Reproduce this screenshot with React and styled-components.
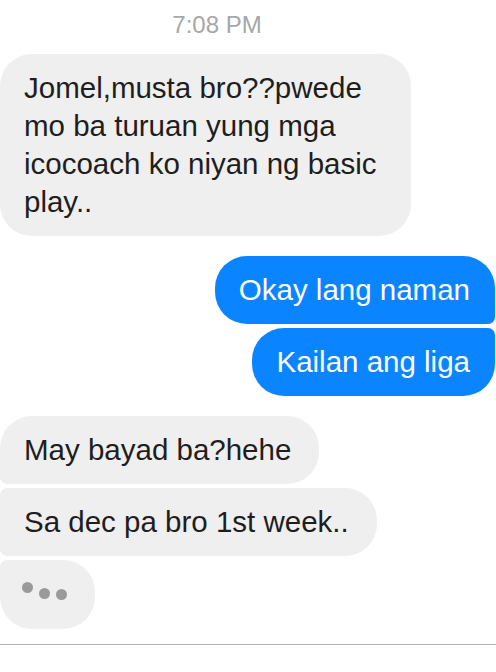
import React from 'react';
import styled, { createGlobalStyle } from 'styled-components';

const GlobalStyle = createGlobalStyle`
  html, body {
    margin: 0;
    padding: 0;
    background: #ffffff;
  }
  body {
    font-family: "Liberation Sans", Arial, Helvetica, sans-serif;
  }
`

const Screen = styled.div`
  width: 496px;
  height: 672px;
  overflow: hidden;
  background: #ffffff;
  display: flex;
  flex-direction: column;
`

const Thread = styled.div`
  display: flex;
  flex-direction: column;
  gap: 20px;
  padding-top: 11px;
`

const Timestamp = styled.div`
  text-align: center;
  font-size: 24px;
  line-height: 28px;
  color: #a7a7a7;
  margin-right: 62px;
  margin-bottom: -5px;
`

const Group = styled.div`
  display: flex;
  flex-direction: column;
  align-items: ${(p) => (p.$mine ? 'flex-end' : 'flex-start')};
  gap: 4px;
`

const BIG = 32;
const SMALL = 7;

const cornerRadius = (mine, pos) => {
  const top = pos === 'middle' || pos === 'last' ? SMALL : BIG;
  const bottom = pos === 'middle' || pos === 'first' ? SMALL : BIG;
  // grouped side gets the small corners
  return mine
    ? `${BIG}px ${top}px ${bottom}px ${BIG}px`
    : `${top}px ${BIG}px ${BIG}px ${bottom}px`;
};

const Bubble = styled.div`
  box-sizing: border-box;
  max-width: ${(p) => (p.$wide ? '411px' : '420px')};
  width: ${(p) => (p.$wide ? '411px' : 'auto')};
  padding: 15px ${(p) => (p.$mine ? '25px' : '28px')} 15px 24px;
  margin-right: ${(p) => (p.$mine ? '1px' : '0')};
  font-size: 29.5px;
  line-height: 38px;
  color: ${(p) => (p.$mine ? '#ffffff' : '#1e1e1e')};
  background: ${(p) => (p.$mine ? '#0a84ff' : '#efefef')};
  border-radius: ${(p) => cornerRadius(p.$mine, p.$pos)};
  white-space: ${(p) => (p.$wide ? 'normal' : 'nowrap')};
`

const TypingBubble = styled.div`
  box-sizing: border-box;
  width: 95px;
  height: 69px;
  padding-left: 22px;
  padding-top: 22px;
  display: flex;
  align-items: flex-start;
  gap: 6px;
  background: #efefef;
  border-radius: ${SMALL}px ${BIG}px ${BIG}px ${BIG}px;
`

const Dot = styled.span`
  width: 11px;
  height: 11px;
  border-radius: 50%;
  background: #9a9a9a;
  margin-top: ${(p) => p.$drop}px;
`

const Divider = styled.div`
  margin-top: 15px;
  border-top: 1.5px solid #b2b2b2;
`

const App = () => {
  return (
    <Screen>
      <GlobalStyle />
      <Thread>
        <Timestamp>7:08 PM</Timestamp>
        <Group>
          <Bubble $wide $pos="single">
            Jomel,musta bro??pwede mo ba turuan yung mga icocoach ko niyan ng basic play..
          </Bubble>
        </Group>
        <Group $mine>
          <Bubble $mine $pos="first">Okay lang naman</Bubble>
          <Bubble $mine $pos="last">Kailan ang liga</Bubble>
        </Group>
        <Group>
          <Bubble $pos="first">May bayad ba?hehe</Bubble>
          <Bubble $pos="middle">Sa dec pa bro 1st week..</Bubble>
          <TypingBubble>
            <Dot $drop={0} />
            <Dot $drop={6} />
            <Dot $drop={7} />
          </TypingBubble>
        </Group>
      </Thread>
      <Divider />
    </Screen>
  );
}

export default App;
